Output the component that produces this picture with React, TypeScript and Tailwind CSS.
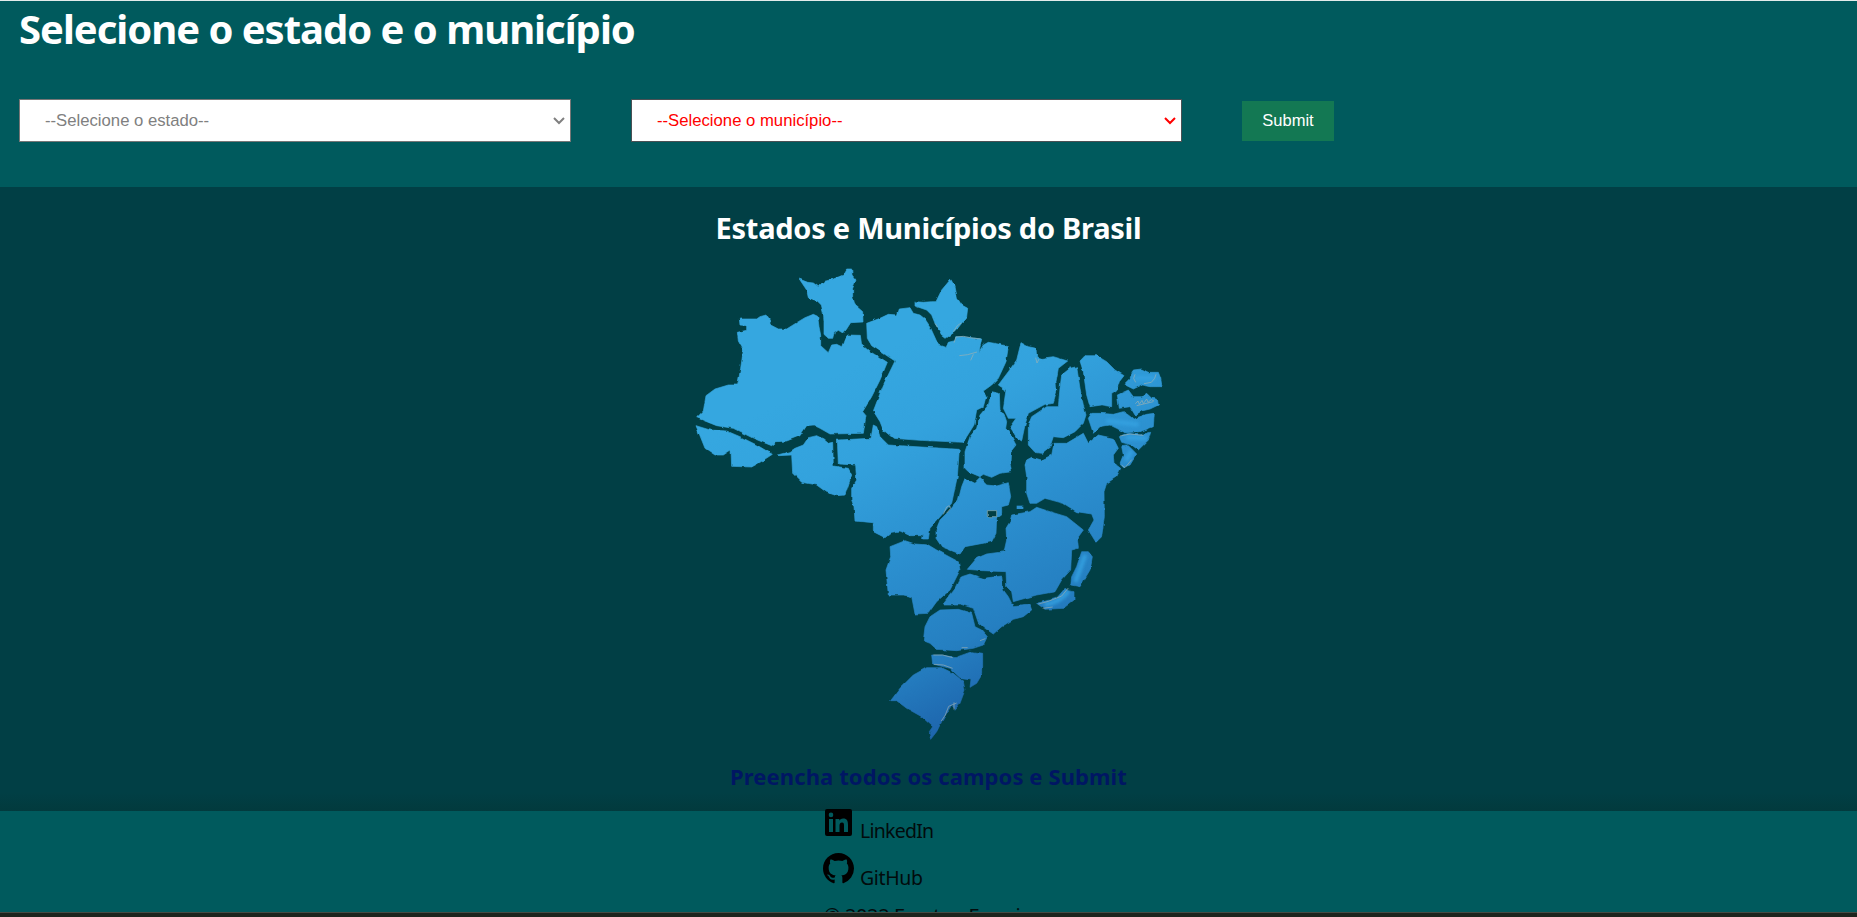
import React from 'react';

type Shape = { id: string; dx?: number; dy?: number; points: string };

const states: Shape[] = [
  { id: 'RR', points: '358,72 383,82 400,84 415,95 430,80 460,72 490,60 500,42 515,42 516,60 528,75 518,100 518,125 525,150 548,170 549,201 512,203 500,222 490,235 475,226 462,235 458,250 445,250 432,238 432,200 430,175 424,150 412,138 385,128 380,105' },
  { id: 'AM', points: '178,192 230,192 240,185 258,180 268,195 272,210 295,222 320,222 355,200 375,188 400,178 413,184 417,215 422,240 422,272 445,293 455,270 470,268 485,275 495,250 503,240 541,241 545,270 570,290 600,308 622,322 600,375 575,425 548,470 558,482 550,535 450,537 420,520 400,510 380,512 360,542 320,558 290,560 275,572 220,550 160,520 110,512 50,488 70,468 78,422 105,402 145,390 173,390 182,340 190,285 175,258 172,232 200,226 200,212 180,210' },
  { id: 'AC', points: '48,512 90,525 140,528 180,545 230,570 277,598 240,622 215,636 155,634 153,585 130,600 105,600 75,580' },
  { id: 'RO', points: '292,600 330,590 345,580 370,570 385,548 410,542 430,552 445,565 458,562 460,633 505,640 515,660 505,690 495,720 470,722 440,712 410,690 365,682 338,655 335,600 295,602' },
  { id: 'MT', points: '472,555 573,550 580,510 590,515 600,545 625,570 838,583 832,665 815,745 785,780 750,820 745,852 728,852 730,835 722,842 690,842 660,828 635,832 615,848 580,830 580,803 525,798 522,755 515,735 515,700 530,675 527,630 475,627' },
  { id: 'PA', points: '560,205 600,190 625,178 652,180 658,162 690,158 700,175 720,180 735,192 750,215 775,270 798,278 805,262 825,257 827,245 850,245 905,252 897,290 910,270 925,262 950,266 985,275 978,320 955,370 935,390 910,408 918,425 910,455 890,465 882,510 860,545 850,562 720,556 640,550 610,525 600,500 580,468 610,390 645,318 610,295 575,272 562,250' },
  { id: 'AP', points: '705,140 730,142 755,140 768,140 785,105 812,73 825,95 832,130 845,150 863,160 860,185 845,205 825,230 798,250 785,240 765,205 755,180 740,165 705,153' },
  { id: 'MA', dx: 720, points: '303,263 325,275 348,280 350,305 365,310 400,305 443,318 415,340 408,380 410,410 400,445 375,448 325,475 315,510 305,558 290,548 270,515 288,490 265,490 250,460 258,405 235,390 265,350 290,315' },
  { id: 'PI', dx: 720, points: '470,335 480,400 490,450 498,480 490,505 465,530 430,548 400,545 390,575 365,595 345,592 325,570 325,510 335,485 380,455 415,455 420,400 425,360 450,340' },
  { id: 'CE', dx: 720, points: '480,318 495,302 530,302 560,320 585,345 612,362 598,380 590,405 575,415 575,455 545,450 510,455 500,420 490,350' },
  { id: 'RN', dx: 720, points: '612,388 630,370 640,345 665,342 685,352 715,352 722,370 726,395 690,395 665,390 640,402 620,392' },
  { id: 'PB', dx: 720, points: '592,420 625,405 640,425 665,425 680,415 695,430 712,432 715,450 690,462 665,468 645,480 630,455 598,460' },
  { id: 'PE', dx: 720, points: '505,490 515,475 540,475 580,478 610,470 625,480 640,492 680,478 703,475 700,515 660,530 615,533 590,520 570,510 540,515 520,535' },
  { id: 'AL', dx: 720, points: '598,545 625,535 660,540 692,532 685,555 655,585 635,570 605,562' },
  { id: 'SE', dx: 720, points: '605,575 625,572 650,597 630,630 612,636 600,625 610,600' },
  { id: 'TO', dx: 720, points: '215,410 238,415 240,465 255,485 260,500 257,520 275,545 288,570 272,590 270,625 275,650 240,655 215,667 190,658 180,665 145,650 135,640 135,590 150,545 170,520 180,480 205,450' },
  { id: 'BA', points: '1035,630 1040,615 1055,607 1085,615 1115,600 1122,565 1160,565 1210,535 1225,565 1255,540 1300,550 1315,580 1300,600 1302,625 1322,640 1310,665 1280,685 1272,710 1273,785 1265,845 1248,862 1225,825 1242,795 1235,777 1190,770 1150,745 1095,730 1070,745 1050,745 1040,715 1040,665' },
  { id: 'GO', dx: 510, dy: 435, points: '345,235 375,250 390,235 410,255 440,258 475,248 482,290 475,315 455,320 455,345 440,355 438,400 425,425 345,440 330,462 275,440 258,415 258,390 270,360 300,330 325,300 335,260' },
  { id: 'MG', dx: 510, dy: 435, points: '485,345 540,335 560,322 600,335 650,350 700,390 682,415 685,445 665,450 662,510 635,540 615,575 560,585 490,605 485,575 470,560 468,515 400,512 352,508 380,475 410,462 462,455 470,420 468,385 480,365' },
  { id: 'ES', dx: 510, dy: 435, points: '695,455 715,455 727,470 720,510 705,535 690,560 662,555 665,530 680,500' },
  { id: 'RJ', dx: 510, dy: 435, points: '560,610 620,595 645,565 655,572 672,575 672,600 640,625 585,628' },
  { id: 'SP', dx: 510, dy: 435, points: '280,612 320,560 335,530 360,522 400,535 455,528 460,570 475,590 490,620 540,615 545,630 520,650 490,658 455,680 430,702 405,685 385,668 370,625 330,612' },
  { id: 'MS', dx: 510, dy: 435, points: '120,440 165,422 195,432 235,435 260,450 325,485 330,510 315,540 300,570 260,605 235,640 195,642 185,590 160,585 115,585 108,510 122,470' },
  { id: 'PR', dx: 510, dy: 435, points: '240,650 270,630 325,628 365,640 375,680 395,690 412,710 400,735 370,745 320,752 260,748 240,730 220,722 225,680' },
  { id: 'SC', points: '755,1200 790,1200 825,1208 875,1190 908,1195 908,1255 890,1285 870,1297 873,1272 840,1268 810,1240 758,1227' },
  { id: 'RS', dx: 210, dy: 705, points: '422,632 450,595 490,555 530,533 575,533 610,550 640,575 645,600 630,640 615,658 605,645 590,670 575,695 560,725 542,748 538,725 548,710 515,680 470,655 440,632' },
];

const absolutePoints = (s: Shape) =>
  s.points
    .split(' ')
    .map((p) => {
      const [x, y] = p.split(',').map(Number);
      return `${x + (s.dx ?? 0)},${y + (s.dy ?? 0)}`;
    })
    .join(' ');

function BrazilMap() {
  return (
    <svg className="block h-[490px] w-[490px]" viewBox="0 0 1470 1470" aria-label="Mapa do Brasil">
      <defs>
        <linearGradient id="sea" gradientUnits="userSpaceOnUse" x1="480" y1="350" x2="1010" y2="1410">
          <stop offset="0" stopColor="#35a7e0" />
          <stop offset="0.22" stopColor="#33a2dd" />
          <stop offset="0.5" stopColor="#2b8fcf" />
          <stop offset="0.75" stopColor="#257fc1" />
          <stop offset="1" stopColor="#1b5ca6" />
        </linearGradient>
        <filter id="rough" x="0" y="0" width="1470" height="1470" filterUnits="userSpaceOnUse" colorInterpolationFilters="sRGB">
          <feTurbulence type="fractalNoise" baseFrequency="0.05" numOctaves="1" seed="4" />
          <feDisplacementMap in="SourceGraphic" scale="9" xChannelSelector="R" yChannelSelector="G" />
        </filter>
        <filter id="soft" x="-20%" y="-20%" width="140%" height="140%">
          <feGaussianBlur stdDeviation="5" />
        </filter>
      </defs>
      <g filter="url(#rough)" fill="url(#sea)" stroke="url(#sea)" strokeWidth="2" strokeLinejoin="round">
        {states.map((s) => (
          <polygon key={s.id} points={absolutePoints(s)} />
        ))}
        <rect x="922" y="767" width="28" height="18" fill="#013e44" stroke="#8fb0ae" strokeWidth="2" />
        <path d="M1010 752h20v10h-20z" stroke="none" />
      </g>
      <g fill="none" stroke="#35a3e2" strokeWidth="14" strokeLinecap="round" opacity="0.8" filter="url(#soft)">
        <path d="M1285 498L1370 508" />
        <path d="M1345 548L1395 550" />
        <path d="M1340 612L1352 592" />
        <path d="M1370 370L1420 370" />
        <path d="M1214 905L1188 975" />
        <path d="M1100 1048Q1140 1040 1162 1012" />
      </g>
      <g fill="none" stroke="#a3b3b0" strokeWidth="2.5" opacity="0.75">
        <path d="M822 263l6-17 22-2 20 4 32 4" />
        <path d="M838 302l25-3 28-8M872 316l8-18" />
        <path d="M1067 308l4 16 6-12" />
        <path d="M1365 358l-4 12 6 12M1392 386l22-4 10-12 4-12" />
        <path d="M1366 446l8-8 4 10 8-12 4 10 10-14 4 10 10-8 8 4M1370 452l50-12" />
        <path d="M1320 543l30-6 40 4" />
        <path d="M1325 630l10 8 20-24" />
        <path d="M790 778l10-22 8-4 4 8-12 14" />
        <path d="M760 1200h28l30 8M762 1228l28 2 28 10" />
        <path d="M784 1398l12-18 10-26 24-10M822 1342v22" />
        <path d="M845 1178h18M900 1157l16-6" />
        <path d="M1075 1047l30-8 40-16 20-24M1088 1060l30-4" />
        <path d="M820 230l12-18 12-8M765 205l8 12" />
      </g>
    </svg>
  );
}

function Field({ label, tone, size }: { label: string; tone: string; size: string }) {
  return (
    <div className={`grid h-[43px] border bg-white ${size} ${tone}`}>
      <select className="col-start-1 row-start-1 appearance-none bg-transparent pl-[25px] text-[16.7px] outline-none">
        <option>{label}</option>
      </select>
      <svg className="pointer-events-none col-start-1 row-start-1 mr-[5px] h-[8px] w-[12px] self-center justify-self-end" viewBox="0 0 12 8">
        <path d="M1 1l5 5 5-5" fill="none" stroke="currentColor" strokeWidth="2" />
      </svg>
    </div>
  );
}

export default function App() {
  return (
    <div className="flex h-[917px] w-full flex-col overflow-hidden bg-[#005a5d] font-['Noto_Sans',sans-serif]">
      <header className="h-[187px] shrink-0 border-t border-[#e3eceb] pl-[19px]">
        <h1 className="pt-[4px] text-[40px] leading-[48px] font-bold tracking-[-1.02px] whitespace-nowrap text-white">
          Selecione o estado e o município
        </h1>
        <form className="mt-[46px] flex items-center font-['Liberation_Sans',sans-serif]">
          <Field label="--Selecione o estado--" tone="text-[#808080]" size="w-[552px] border-[#767676]" />
          <Field label="--Selecione o município--" tone="text-[#ff0000]" size="ml-[60px] w-[551px] border-[#4a5054]" />
          <button type="button" className="ml-[60px] h-[40px] w-[92px] bg-[#137853] text-[16.5px] text-white">
            Submit
          </button>
        </form>
      </header>
      <main className="flex h-[624px] shrink-0 flex-col items-center bg-linear-to-b from-[#013f45] from-97% to-[#023a3d]">
        <h2 className="mt-[21px] h-[47px] text-[29px] leading-[40px] font-bold tracking-[-0.26px] whitespace-nowrap text-white">
          Estados e Municípios do Brasil
        </h2>
        <div className="mr-[7px]">
          <BrazilMap />
        </div>
        <h3 className="mt-[15px] text-[22px] leading-[32px] font-bold tracking-[0.1px] whitespace-nowrap text-[#001663]">
          Preencha todos os campos e Submit
        </h3>
      </main>
      <footer className="h-[101px] shrink-0 pl-[823px] text-[20px] text-[#020b0c]">
        <div className="-mt-[5px] flex h-[47px] gap-[6px]">
          <svg className="h-[32px] w-[31px] text-black" viewBox="0 0 31 32" fill="currentColor">
            <path fillRule="evenodd" d="M4 3h23a2 2 0 0 1 2 2v23a2 2 0 0 1-2 2H4a2 2 0 0 1-2-2V5a2 2 0 0 1 2-2zm2 10v13h4V13zm2-6.400a2.300 2.300 0 1 0 0 4.600 2.300 2.300 0 0 0 0-4.600zM12.500 13v13h4v-6.400c0-1.700.5-3.200 2.500-3.200s2 1.800 2 3.300V26h4v-7.200c0-3.500-.8-6.200-4.900-6.200-2 0-3.200 1-3.800 2.100V13z" />
          </svg>
          <span className="mt-[11px] text-[19.5px] leading-[28px] tracking-[-0.75px]">LinkedIn</span>
        </div>
        <div className="flex h-[46px] gap-[6px]">
          <svg className="h-[31px] w-[31px] text-black" viewBox="0 0 16 16" fill="currentColor">
            <path d="M8 0C3.580 0 0 3.580 0 8c0 3.540 2.290 6.530 5.470 7.590.4.070.55-.17.55-.38 0-.19-.01-.82-.01-1.490-2.010.37-2.530-.49-2.690-.94-.09-.23-.48-.94-.82-1.130-.28-.15-.68-.52-.01-.53.63-.01 1.080.58 1.230.82.72 1.210 1.870.87 2.330.66.07-.52.28-.87.51-1.070-1.780-.2-3.640-.89-3.640-3.950 0-.87.31-1.590.82-2.150-.08-.2-.36-1.020.08-2.120 0 0 .67-.21 2.200.82.64-.18 1.320-.27 2-.27s1.360.09 2 .27c1.530-1.040 2.200-.82 2.200-.82.44 1.100.16 1.920.08 2.120.51.56.82 1.270.82 2.150 0 3.070-1.870 3.750-3.650 3.950.29.25.54.73.54 1.480 0 1.070-.01 1.930-.01 2.200 0 .21.15.46.55.38A8.010 8.010 0 0 0 16 8c0-4.420-3.580-8-8-8z" />
          </svg>
          <span className="mt-[11px] text-[19.5px] leading-[28px] tracking-[-0.35px]">GitHub</span>
        </div>
        <div className="h-[13px] overflow-hidden pt-[3px] pl-px leading-[28px] tracking-[-0.4px] whitespace-nowrap">© 2022 Everton Ferreira</div>
      </footer>
      <div className="h-[5px] shrink-0 border-t border-[#454b43] bg-[#1d241d]" />
    </div>
  );
}
